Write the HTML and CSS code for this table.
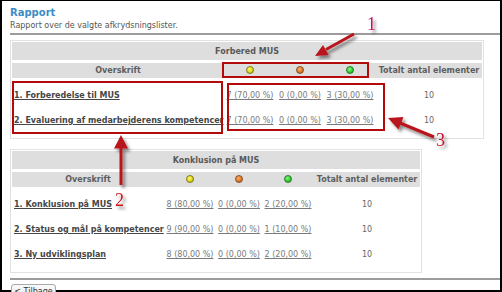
FILE: index.html
```html
<!DOCTYPE html>
<html lang="da">
<head>
<meta charset="utf-8">
<title>Rapport</title>
<link rel="stylesheet" href="styles.css">
</head>
<body>
<div class="frame">
  <h1 class="title">Rapport</h1>
  <p class="sub">Rapport over de valgte afkrydsningslister.</p>
  <div class="rule"></div>

  <div class="panel p1">
    <table class="report">
      <colgroup>
        <col class="c-name"><col class="c-val"><col class="c-val2"><col class="c-val"><col class="c-total">
      </colgroup>
      <thead>
        <tr class="group"><th colspan="5">Forbered MUS</th></tr>
        <tr class="cols">
          <th>Overskrift</th>
          <th><span class="dot yellow"></span></th>
          <th><span class="dot orange"></span></th>
          <th><span class="dot green"></span></th>
          <th>Totalt antal elementer</th>
        </tr>
      </thead>
      <tbody>
        <tr>
          <td class="name"><a href="#">1. Forberedelse til MUS</a></td>
          <td class="val"><a href="#">7 (70,00 %)</a></td>
          <td class="val"><a href="#">0 (0,00 %)</a></td>
          <td class="val"><a href="#">3 (30,00 %)</a></td>
          <td class="total">10</td>
        </tr>
        <tr>
          <td class="name"><a href="#">2. Evaluering af medarbejderens kompetencer</a></td>
          <td class="val"><a href="#">7 (70,00 %)</a></td>
          <td class="val"><a href="#">0 (0,00 %)</a></td>
          <td class="val"><a href="#">3 (30,00 %)</a></td>
          <td class="total">10</td>
        </tr>
      </tbody>
    </table>
  </div>

  <div class="panel p2">
    <table class="report">
      <colgroup>
        <col class="c-name2"><col class="c-val"><col class="c-val3"><col class="c-val"><col class="c-total">
      </colgroup>
      <thead>
        <tr class="group"><th colspan="5">Konklusion på MUS</th></tr>
        <tr class="cols">
          <th>Overskrift</th>
          <th><span class="dot yellow"></span></th>
          <th><span class="dot orange"></span></th>
          <th><span class="dot green"></span></th>
          <th>Totalt antal elementer</th>
        </tr>
      </thead>
      <tbody>
        <tr>
          <td class="name"><a href="#">1. Konklusion på MUS</a></td>
          <td class="val"><a href="#">8 (80,00 %)</a></td>
          <td class="val"><a href="#">0 (0,00 %)</a></td>
          <td class="val"><a href="#">2 (20,00 %)</a></td>
          <td class="total">10</td>
        </tr>
        <tr>
          <td class="name"><a href="#">2. Status og mål på kompetencer</a></td>
          <td class="val"><a href="#">9 (90,00 %)</a></td>
          <td class="val"><a href="#">0 (0,00 %)</a></td>
          <td class="val"><a href="#">1 (10,00 %)</a></td>
          <td class="total">10</td>
        </tr>
        <tr>
          <td class="name"><a href="#">3. Ny udviklingsplan</a></td>
          <td class="val"><a href="#">8 (80,00 %)</a></td>
          <td class="val"><a href="#">0 (0,00 %)</a></td>
          <td class="val"><a href="#">2 (20,00 %)</a></td>
          <td class="total">10</td>
        </tr>
      </tbody>
    </table>
  </div>

  <div class="rule rule-bottom"></div>
  <button class="back" type="button">&lt; Tilbage</button>

  <svg class="annot" width="502" height="292" viewBox="0 0 502 292" aria-hidden="true">
    <defs>
      <filter id="sh" x="-20%" y="-20%" width="160%" height="160%">
        <feDropShadow dx="2.5" dy="3" stdDeviation="1.6" flood-color="#000" flood-opacity="0.45"/>
      </filter>
    </defs>
    <g fill="none" stroke="#b40a0a" stroke-width="2">
      <rect x="223" y="63" width="145" height="14"/>
      <rect x="13" y="82" width="209" height="51"/>
      <rect x="228" y="84" width="156" height="46"/>
    </g>
    <g filter="url(#sh)" fill="#b8141c" stroke="#b8141c">
      <line x1="354" y1="34" x2="326" y2="49.5" stroke-width="3"/>
      <polygon points="315,56 328.5,55 323,45" stroke="none"/>
      <line x1="121" y1="185" x2="121" y2="146" stroke-width="3"/>
      <polygon points="121,135 114,148.5 128,148.5" stroke="none"/>
      <line x1="434" y1="137" x2="400" y2="123" stroke-width="3"/>
      <polygon points="388,118 403.5,117 398.5,129.5" stroke="none"/>
    </g>
    <g filter="url(#sh)" class="num">
      <text x="367" y="30" fill="#c8106a">1</text>
      <text x="115" y="206" fill="#d01818">2</text>
      <text x="436" y="146" fill="#c8102e">3</text>
    </g>
  </svg>
</div>
</body>
</html>
```

FILE: styles.css
```css
html, body {
  margin: 0;
  padding: 0;
  background: #fff;
}

.frame {
  position: relative;
  width: 502px;
  height: 292px;
  box-sizing: border-box;
  padding: 7px 2px 0 10px;
  overflow: hidden;
  background: #fff;
  box-shadow: inset 2px 1px 0 #000, inset -2px -2px 0 #000;
  font-family: "DejaVu Sans", Verdana, sans-serif;
  font-size: 8px;
  color: #555;
}

.title {
  margin: 0;
  font-size: 10px;
  line-height: 12px;
  font-weight: bold;
  color: #3c8dc6;
}

.sub {
  margin: 2px 0 0;
  font-size: 8px;
  line-height: 10px;
  color: #555;
}

.rule {
  margin-top: 2px;
  border-top: 2px solid #9c9c9c;
}

.panel {
  margin-top: 5px;
  border: 1px solid #e2e2e2;
  padding: 1px 1px 5px;
  background: #fff;
}

.p1 { width: 472px; box-sizing: content-box; }
.p2 { width: 408px; margin-top: 10px; }
.p1 { width: 470px; }

.report {
  width: 100%;
  table-layout: fixed;
  border-collapse: separate;
  border-spacing: 0;
}

.c-name { width: 212px; }
.c-name2 { width: 152px; }
.c-val { width: 52px; }
.c-val2 { width: 48px; }
.c-val3 { width: 46px; }
.c-total { width: 106px; }

.report th {
  background: #dedede;
  font-weight: bold;
  color: #595959;
  text-align: center;
  padding: 0;
  white-space: nowrap;
  background-clip: padding-box;
}

.group th {
  height: 18px;
}

.cols th {
  height: 15px;
  border-top: 3px solid #fff;
  color: #5e5e5e;
}

.report td {
  height: 25px;
  padding: 0;
  vertical-align: middle;
  white-space: nowrap;
}

.report tbody tr:first-child td {
  padding-top: 5px;
}

.name {
  padding-left: 2px !important;
}

.name a {
  font-weight: bold;
  color: #464646;
  text-decoration: underline;
}

.val {
  text-align: center;
}

.val a {
  color: #7a7a7a;
  text-decoration: underline;
}

.total {
  text-align: center;
  color: #666;
}

.dot {
  display: inline-block;
  width: 8px;
  height: 8px;
  border-radius: 50%;
  box-sizing: border-box;
  vertical-align: middle;
  margin-top: -1px;
}

.yellow {
  background: radial-gradient(circle at 40% 35%, #fbf86a 0, #e0d81a 55%, #a8a010 100%);
  border: 1px solid #7e7a18;
}

.orange {
  background: radial-gradient(circle at 40% 35%, #f6b070 0, #e07a28 55%, #a8501a 100%);
  border: 1px solid #8a4e20;
}

.green {
  background: radial-gradient(circle at 40% 35%, #8ff48a 0, #2ed22e 55%, #16901a 100%);
  border: 1px solid #2a7a2a;
}

.rule-bottom {
  margin-top: 5px;
}

.back {
  display: block;
  margin: 4px 0 0 1px;
  width: 45px;
  height: 16px;
  padding: 0;
  font-family: "DejaVu Sans", Verdana, sans-serif;
  font-size: 8px;
  line-height: 14px;
  color: #333;
  text-align: center;
  background: linear-gradient(#fafafa, #e8e8e8);
  border: 1px solid #a8a8a8;
  border-radius: 3px;
}

.annot {
  position: absolute;
  left: 0;
  top: 0;
  pointer-events: none;
}

.num text {
  font-family: "Liberation Serif", "Times New Roman", serif;
  font-size: 18px;
}
```
